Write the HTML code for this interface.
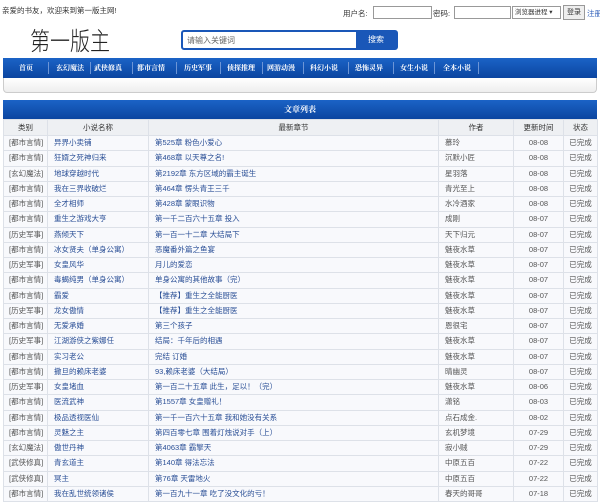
<!DOCTYPE html>
<html><head><meta charset="utf-8"><style>
*{margin:0;padding:0;box-sizing:border-box}
body{width:600px;height:500px;overflow:hidden;background:#fff;font-family:"Liberation Sans","Noto Sans CJK SC",sans-serif;font-size:8px;color:#333;position:relative}
.a{position:absolute;white-space:nowrap}
.top{font-size:7.5px;color:#333}
input.t{position:absolute;height:13px;border:1px solid #999;background:#fff}
.logo{left:30px;top:25px;font-size:25px;font-weight:300;color:#222;font-family:"Noto Sans CJK SC",sans-serif;transform:scaleX(0.8);transform-origin:left top;line-height:30px}
.sb{left:181px;top:30px;width:217px;height:20px;border:2px solid #1a57b8;border-radius:3px;background:#fff}
.sb span{position:absolute;left:4px;top:3px;font-size:8px;color:#666}
.sb b{position:absolute;right:0;top:0;width:40px;height:16px;background:#1a57b8;color:#fff;font-weight:normal;font-size:8px;text-align:center;line-height:16px}
.nav{left:3px;top:58px;width:594px;height:20px;background:linear-gradient(#1b63c6,#0b45a0);}
.nav span{position:absolute;top:5px;color:#fff;font-weight:bold;font-size:7px;line-height:10px;font-family:"Noto Serif CJK SC",serif}
.nav i{position:absolute;top:4px;width:1px;height:12px;background:#6c95d6}
.gb{left:3px;top:78px;width:594px;height:15px;background:linear-gradient(#fff,#eee);border:1px solid #ccc;border-top:none;border-radius:0 0 4px 4px}
.tb{left:3px;top:100px;width:594px;height:19px;background:linear-gradient(#1b63c6,#0b45a0);color:#fff;font-weight:bold;text-align:center;line-height:19px;font-size:8px;font-family:"Noto Serif CJK SC",serif}
table{position:absolute;left:3px;top:119px;width:594px;border-collapse:collapse;table-layout:fixed}
td{border:1px solid #dde1e8;height:15.26px;padding:0 0 0 6px;font-size:7.5px;line-height:10px;white-space:nowrap;overflow:hidden;background:#f8f9fc}
tr.h td{background:#eef0f3;text-align:center;padding:0;color:#333;height:16px}
td.c{color:#555;padding-left:5px}
td.n,td.l{color:#2a4f96}
td.t,td.s{text-align:center;padding:0;color:#555}
td.au{color:#555}
</style></head><body>
<div class="a top" style="left:2px;top:5px">亲爱的书友，欢迎来到第一版主网!</div>
<div class="a top" style="left:343px;top:8px">用户名:</div>
<input class="t" style="left:373px;top:6px;width:59px">
<div class="a top" style="left:433px;top:8px">密码:</div>
<input class="t" style="left:454px;top:6px;width:57px">
<div class="a" style="left:512px;top:6px;width:49px;height:13px;border:1px solid #999;font-size:6.5px;line-height:11px;padding-left:2px;background:#fff">浏览器进程 ▾</div>
<div class="a" style="left:563px;top:5px;width:22px;height:15px;border:1px solid #999;background:#eee;font-size:7px;line-height:13px;text-align:center">登录</div>
<div class="a" style="left:587px;top:8px;color:#2a5bb8;font-size:7.5px">注册</div>
<div class="a logo">第一版主</div>
<div class="a sb"><span>请输入关键词</span><b>搜索</b></div>
<div class="a nav">
<span style="left:16px">首页</span><i style="left:45px"></i>
<span style="left:53px">玄幻魔法</span><i style="left:87px"></i>
<span style="left:91px">武侠修真</span><i style="left:129px"></i>
<span style="left:134px">都市言情</span><i style="left:173px"></i>
<span style="left:181px">历史军事</span><i style="left:217px"></i>
<span style="left:224px">侦探推理</span><i style="left:259px"></i>
<span style="left:264px">网游动漫</span><i style="left:300px"></i>
<span style="left:307px">科幻小说</span><i style="left:345px"></i>
<span style="left:352px">恐怖灵异</span><i style="left:390px"></i>
<span style="left:397px">女生小说</span><i style="left:431px"></i>
<span style="left:440px">全本小说</span><i style="left:475px"></i>
</div>
<div class="a gb"></div>
<div class="a tb">文章列表</div>
<table>
<colgroup><col style="width:44px"><col style="width:101px"><col style="width:290px"><col style="width:75px"><col style="width:50px"><col style="width:34px"></colgroup>
<tr class="h"><td>类别</td><td>小说名称</td><td>最新章节</td><td>作者</td><td>更新时间</td><td>状态</td></tr>
<tr><td class="c">[都市言情]</td><td class="n">异界小卖铺</td><td class="l">第525章 粉色小爱心</td><td class="au">慕玲</td><td class="t">08-08</td><td class="s">已完成</td></tr>
<tr><td class="c">[都市言情]</td><td class="n">狂婿之死神归来</td><td class="l">第468章 以天尊之名!</td><td class="au">沉默小匠</td><td class="t">08-08</td><td class="s">已完成</td></tr>
<tr><td class="c">[玄幻魔法]</td><td class="n">地球穿越时代</td><td class="l">第2192章 东方区域的霸主诞生</td><td class="au">星羽落</td><td class="t">08-08</td><td class="s">已完成</td></tr>
<tr><td class="c">[都市言情]</td><td class="n">我在三界收破烂</td><td class="l">第464章 愣头青王三千</td><td class="au">青光至上</td><td class="t">08-08</td><td class="s">已完成</td></tr>
<tr><td class="c">[都市言情]</td><td class="n">全才相师</td><td class="l">第428章 蒙眼识物</td><td class="au">水冷酒家</td><td class="t">08-08</td><td class="s">已完成</td></tr>
<tr><td class="c">[都市言情]</td><td class="n">重生之游戏大亨</td><td class="l">第一千二百六十五章 投入</td><td class="au">成刚</td><td class="t">08-07</td><td class="s">已完成</td></tr>
<tr><td class="c">[历史军事]</td><td class="n">燕倾天下</td><td class="l">第一百一十二章 大结局下</td><td class="au">天下归元</td><td class="t">08-07</td><td class="s">已完成</td></tr>
<tr><td class="c">[都市言情]</td><td class="n">冰女贤夫（单身公寓）</td><td class="l">恶魔番外篇之鱼宴</td><td class="au">魅夜水草</td><td class="t">08-07</td><td class="s">已完成</td></tr>
<tr><td class="c">[历史军事]</td><td class="n">女皇风华</td><td class="l">月儿的爱恋</td><td class="au">魅夜水草</td><td class="t">08-07</td><td class="s">已完成</td></tr>
<tr><td class="c">[都市言情]</td><td class="n">毒蝎纯男（单身公寓）</td><td class="l">单身公寓的其他故事（完）</td><td class="au">魅夜水草</td><td class="t">08-07</td><td class="s">已完成</td></tr>
<tr><td class="c">[都市言情]</td><td class="n">霸爱</td><td class="l">【推荐】重生之全能厨医</td><td class="au">魅夜水草</td><td class="t">08-07</td><td class="s">已完成</td></tr>
<tr><td class="c">[历史军事]</td><td class="n">龙女傲情</td><td class="l">【推荐】重生之全能厨医</td><td class="au">魅夜水草</td><td class="t">08-07</td><td class="s">已完成</td></tr>
<tr><td class="c">[都市言情]</td><td class="n">无爱承婚</td><td class="l">第三个孩子</td><td class="au">恩很宅</td><td class="t">08-07</td><td class="s">已完成</td></tr>
<tr><td class="c">[历史军事]</td><td class="n">江湖游侠之紫娜任</td><td class="l">结局：千年后的相遇</td><td class="au">魅夜水草</td><td class="t">08-07</td><td class="s">已完成</td></tr>
<tr><td class="c">[都市言情]</td><td class="n">实习老公</td><td class="l">完结 订婚</td><td class="au">魅夜水草</td><td class="t">08-07</td><td class="s">已完成</td></tr>
<tr><td class="c">[都市言情]</td><td class="n">撒旦的赖床老婆</td><td class="l">93,赖床老婆（大结局）</td><td class="au">晴幽灵</td><td class="t">08-07</td><td class="s">已完成</td></tr>
<tr><td class="c">[历史军事]</td><td class="n">女皇堵血</td><td class="l">第一百二十五章 此生，足以！（完）</td><td class="au">魅夜水草</td><td class="t">08-06</td><td class="s">已完成</td></tr>
<tr><td class="c">[都市言情]</td><td class="n">医流武神</td><td class="l">第1557章 女皇赠礼！</td><td class="au">潇铭</td><td class="t">08-03</td><td class="s">已完成</td></tr>
<tr><td class="c">[都市言情]</td><td class="n">极品透视医仙</td><td class="l">第一千一百六十五章 我和她没有关系</td><td class="au">点石成金.</td><td class="t">08-02</td><td class="s">已完成</td></tr>
<tr><td class="c">[都市言情]</td><td class="n">灵魅之主</td><td class="l">第四百零七章 围着灯烛说对手（上）</td><td class="au">玄机梦境</td><td class="t">07-29</td><td class="s">已完成</td></tr>
<tr><td class="c">[玄幻魔法]</td><td class="n">傲世丹神</td><td class="l">第4063章 霸擎天</td><td class="au">寂小贼</td><td class="t">07-29</td><td class="s">已完成</td></tr>
<tr><td class="c">[武侠修真]</td><td class="n">青玄道主</td><td class="l">第140章 得法忘法</td><td class="au">中原五百</td><td class="t">07-22</td><td class="s">已完成</td></tr>
<tr><td class="c">[武侠修真]</td><td class="n">冥主</td><td class="l">第76章 天雷地火</td><td class="au">中原五百</td><td class="t">07-22</td><td class="s">已完成</td></tr>
<tr><td class="c">[都市言情]</td><td class="n">我在乱世统领诸侯</td><td class="l">第一百九十一章 吃了没文化的亏！</td><td class="au">春天的哥哥</td><td class="t">07-18</td><td class="s">已完成</td></tr>
</table>
</body></html>
